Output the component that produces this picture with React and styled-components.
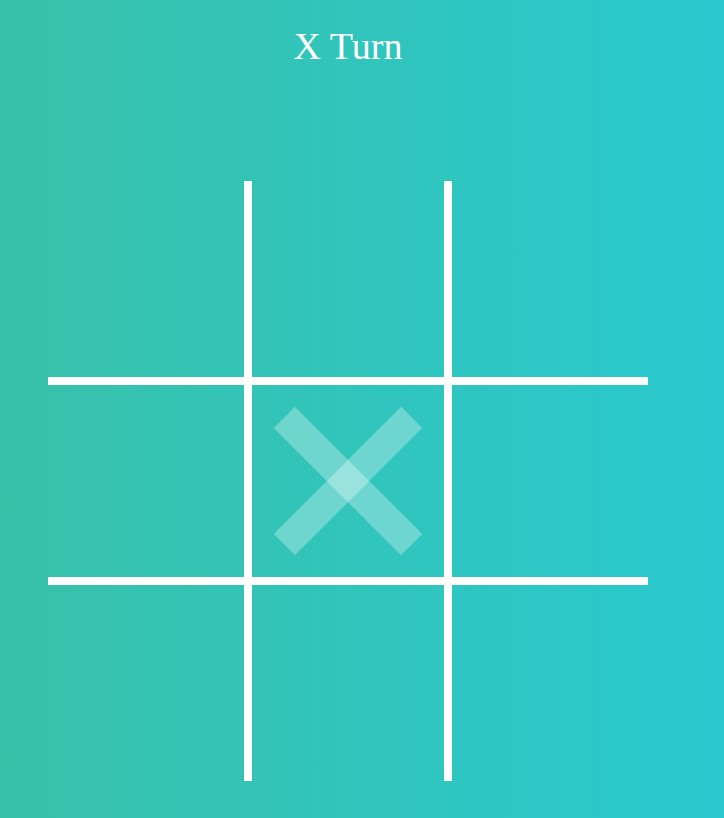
import React, { useState } from "react";
import styled, { createGlobalStyle } from "styled-components";

const Global = createGlobalStyle`
  html, body { margin: 0; padding: 0; }
  body { font-family: "Liberation Serif", "Times New Roman", serif; }
`;

const Page = styled.div`
  min-height: 100vh;
  background: linear-gradient(to right, #38c1a9, #29c9cf);
  padding: 25px 0 0 48px;
  box-sizing: border-box;
`;

const Column = styled.div`
  width: 600px;
  display: flex;
  flex-direction: column;
  align-items: center;
`;

const Title = styled.h1`
  margin: 0;
  font-size: 38px;
  font-weight: normal;
  color: #fff;
  line-height: 42px;
`;

const Board = styled.div`
  margin-top: 114px;
  display: grid;
  grid-template-columns: repeat(3, 200px);
  grid-template-rows: repeat(3, 200px);
`;

const Cell = styled.div`
  box-sizing: border-box;
  display: grid;
  place-items: center;
  border: 0 solid #fff;
  border-top-width: ${(p) => (p.$row > 0 ? 4 : 0)}px;
  border-bottom-width: ${(p) => (p.$row < 2 ? 4 : 0)}px;
  border-left-width: ${(p) => (p.$col > 0 ? 4 : 0)}px;
  border-right-width: ${(p) => (p.$col < 2 ? 4 : 0)}px;
  cursor: pointer;
`;

const Bar = styled.span`
  grid-area: 1 / 1;
  width: 30px;
  height: 180px;
  background: rgba(255, 255, 255, ${(p) => (p.$ghost ? 0.3 : 1)});
  transform: rotate(${(p) => p.$angle}deg);
`;

function XMark({ ghost }) {
  return (
    <>
      <Bar $angle={45} $ghost={ghost} />
      <Bar $angle={-45} $ghost={ghost} />
    </>
  );
}

export default function App() {
  const [hover, setHover] = useState(4);
  const cells = Array.from({ length: 9 }, (_, i) => i);

  return (
    <Page>
      <Global />
      <Column>
        <Title>X Turn</Title>
        <Board>
          {cells.map((i) => (
            <Cell
              key={i}
              $row={Math.floor(i / 3)}
              $col={i % 3}
              onMouseEnter={() => setHover(i)}
            >
              {hover === i && <XMark ghost />}
            </Cell>
          ))}
        </Board>
      </Column>
    </Page>
  );
}
